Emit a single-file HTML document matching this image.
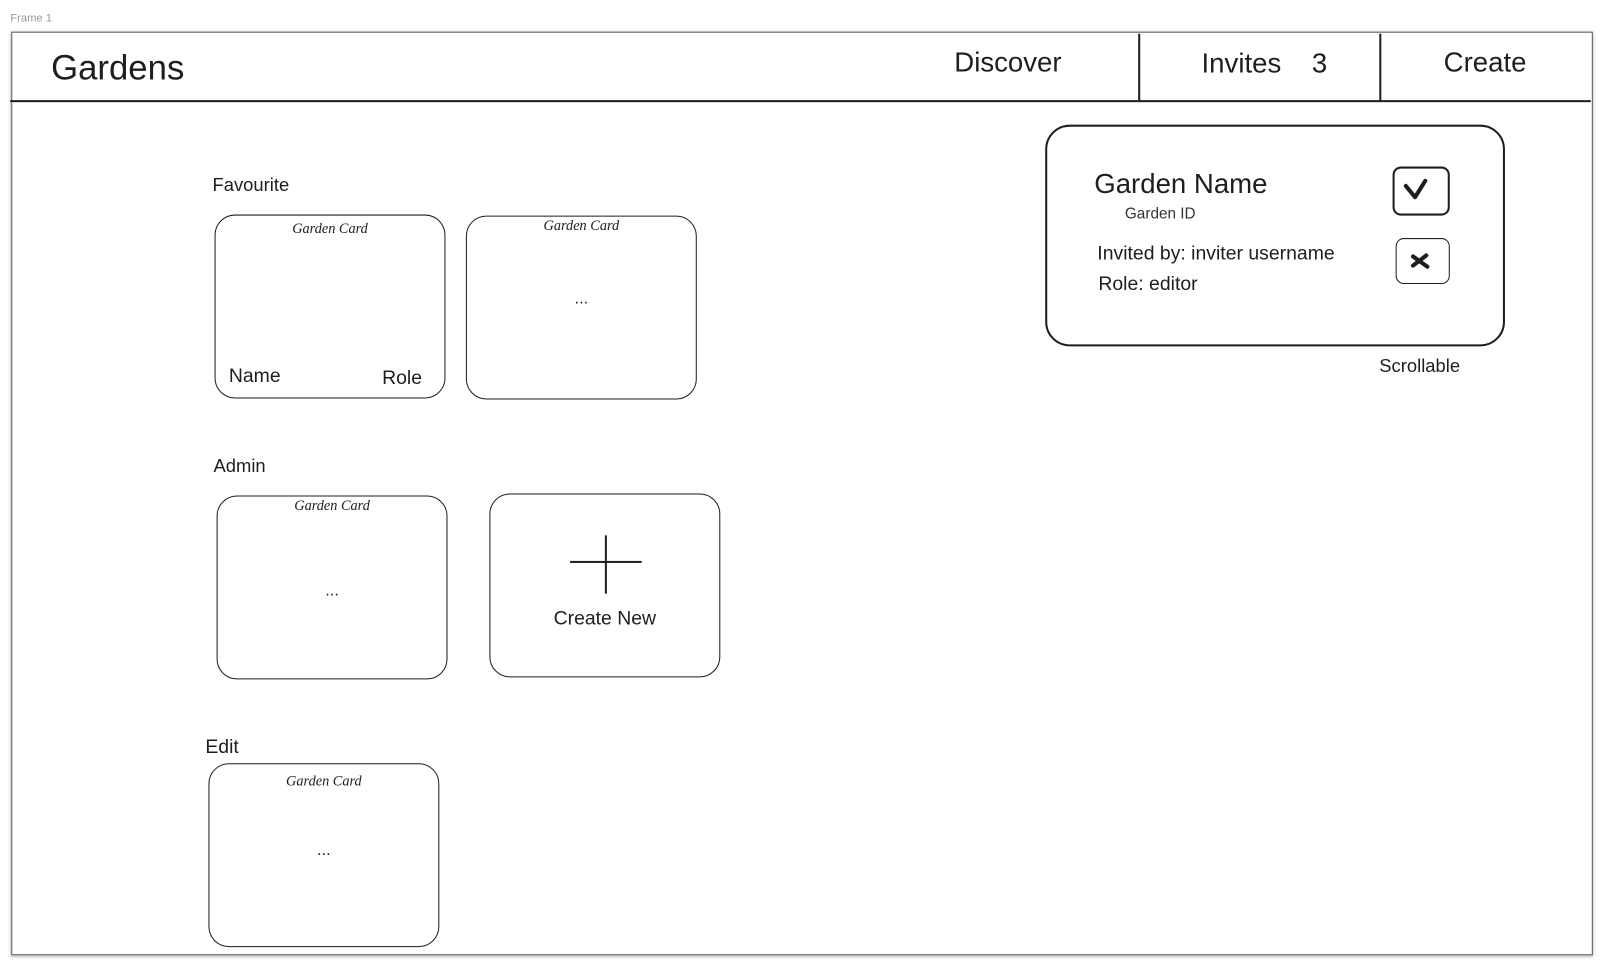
<!DOCTYPE html>
<html><head><meta charset="utf-8"><style>
html,body{margin:0;padding:0;background:#fff;width:1602px;height:965px;overflow:hidden}
#s{position:absolute;left:0;top:0;width:1568px;height:945px;transform:scale(1.0217);transform-origin:0 0;font-family:"Liberation Sans",sans-serif;color:#1e1e1e}
.a{position:absolute}
.card{position:absolute;border:1.5px solid #1e1e1e;border-radius:20px;width:224px;height:178px}
.gc{position:absolute;top:6px;left:0;right:0;text-align:center;font-family:"Liberation Serif",serif;font-style:italic;font-size:14px}
.dots{position:absolute;left:0;right:0;top:72px;text-align:center;font-size:16px}
</style></head><body><div id="s">
<div class="a" style="left:10px;top:12px;font-size:11px;color:#999">Frame 1</div>
<div class="a" style="left:11px;top:31px;width:1546px;height:902px;border:1.5px solid #555;box-shadow:0 1px 3px #aaa"></div>
<div class="a" style="left:10px;top:98px;width:1547px;height:2px;background:#1e1e1e"></div>
<div class="a" style="left:1114px;top:33px;width:2px;height:66px;background:#1e1e1e"></div>
<div class="a" style="left:1350px;top:33px;width:2px;height:66px;background:#1e1e1e"></div>
<div class="a" style="left:50px;top:48px;font-size:34px">Gardens</div>
<div class="a" style="left:934px;top:46px;font-size:27px">Discover</div>
<div class="a" style="left:1176px;top:47px;font-size:27px">Invites&nbsp;&nbsp;&nbsp;&nbsp;3</div>
<div class="a" style="left:1413px;top:46px;font-size:27px">Create</div>

<div class="a" style="left:208px;top:171px;font-size:18px">Favourite</div>
<div class="card" style="left:210px;top:210px"><div class="gc">Garden Card</div>
<div class="a" style="left:13px;top:147px;font-size:19px">Name</div><div class="a" style="left:163px;top:149px;font-size:19px">Role</div></div>
<div class="card" style="left:456px;top:211px"><div class="gc" style="top:2px">Garden Card</div><div class="dots">...</div></div>

<div class="a" style="left:209px;top:446px;font-size:18px">Admin</div>
<div class="card" style="left:212px;top:485px"><div class="gc" style="top:2px">Garden Card</div><div class="dots" style="top:84px">...</div></div>
<div class="card" style="left:479px;top:483px">
<div class="a" style="left:78px;top:65px;width:70px;height:2px;background:#1e1e1e"></div>
<div class="a" style="left:112px;top:40px;width:2px;height:57px;background:#1e1e1e"></div>
<div class="a" style="left:0;right:0;top:111px;text-align:center;font-size:19px">Create New</div></div>

<div class="a" style="left:201px;top:721px;font-size:19px">Edit</div>
<div class="card" style="left:204px;top:747px"><div class="gc" style="top:10px">Garden Card</div><div class="dots" style="top:76px">...</div></div>

<div class="a" style="left:1023px;top:122px;width:446px;height:213px;border:2px solid #1e1e1e;border-radius:24px"></div>
<div class="a" style="left:1071px;top:165px;font-size:27px">Garden Name</div>
<div class="a" style="left:1101px;top:201px;font-size:15px;color:#333">Garden ID</div>
<div class="a" style="left:1074px;top:238px;font-size:19px">Invited by: inviter username</div>
<div class="a" style="left:1075px;top:268px;font-size:19px">Role: editor</div>
<div class="a" style="left:1363px;top:163px;width:52px;height:44px;border:2px solid #1e1e1e;border-radius:8px">
<svg width="52" height="44" style="position:absolute;left:0;top:0"><path d="M11 17 L20 28 L30 12" fill="none" stroke="#1e1e1e" stroke-width="4" stroke-linecap="round" stroke-linejoin="round"/></svg></div>
<div class="a" style="left:1366px;top:233px;width:51px;height:43px;border:1.5px solid #1e1e1e;border-radius:8px">
<svg width="51" height="43" style="position:absolute;left:0;top:0"><path d="M16 17 L30 27 M16 26 L29 16" fill="none" stroke="#1e1e1e" stroke-width="4" stroke-linecap="round"/></svg></div>
<div class="a" style="left:1350px;top:348px;font-size:18px">Scrollable</div>
</div></body></html>
